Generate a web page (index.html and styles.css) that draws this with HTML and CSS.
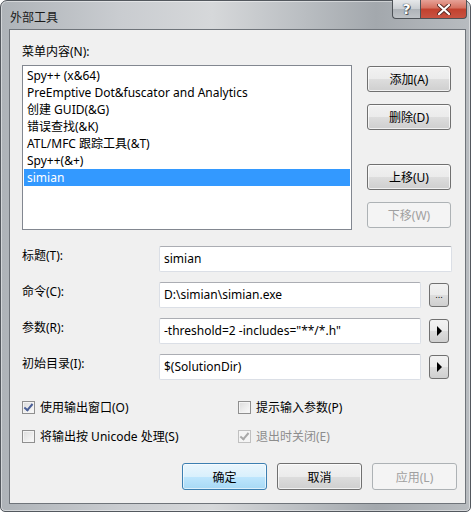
FILE: index.html
```html
<!DOCTYPE html>
<html>
<head>
    <title>外部工具</title>
    <link rel="stylesheet" href="styles.css">
</head>
<body>
    <div class="window">
        <div class="titlebar">
            <span class="title">外部工具</span>
            <div class="caption-buttons">
                <div class="cap-btn help">?</div>
                <div class="cap-btn close">
                    <svg width="14" height="11" viewBox="0 0 14 11">
                        <path d="M2 1 L12 10 M12 1 L2 10" stroke="#5a2a24" stroke-width="4" stroke-linecap="round"/>
                        <path d="M2 1 L12 10 M12 1 L2 10" stroke="#ffffff" stroke-width="2.2" stroke-linecap="round"/>
                    </svg>
                </div>
            </div>
        </div>

        <div class="client">
            <div class="list-label">菜单内容(N):</div>
            <div class="list-row">
                <ul class="listbox">
                    <li>Spy++ (x&amp;64)</li>
                    <li>PreEmptive Dot&amp;fuscator and Analytics</li>
                    <li>创建 GUID(&amp;G)</li>
                    <li>错误查找(&amp;K)</li>
                    <li>ATL/MFC 跟踪工具(&amp;T)</li>
                    <li>Spy++(&amp;+)</li>
                    <li class="selected">simian</li>
                </ul>
                <div class="side-buttons">
                    <button class="btn">添加(A)</button>
                    <button class="btn">删除(D)</button>
                    <button class="btn move-up">上移(U)</button>
                    <button class="btn" disabled>下移(W)</button>
                </div>
            </div>

            <div class="form">
                <label class="field-label">标题(T):</label>
                <div class="input wide">simian</div>

                <label class="field-label">命令(C):</label>
                <div class="input">D:\simian\simian.exe</div>
                <button class="small-btn dots">...</button>

                <label class="field-label">参数(R):</label>
                <div class="input">-threshold=2 -includes="**/*.h"</div>
                <button class="small-btn"><span class="arrow"></span></button>

                <label class="field-label">初始目录(I):</label>
                <div class="input">$(SolutionDir)</div>
                <button class="small-btn"><span class="arrow"></span></button>
            </div>

            <div class="options">
                <div class="check"><span class="box checked"></span>使用输出窗口(O)</div>
                <div class="check"><span class="box"></span>提示输入参数(P)</div>
                <div class="check"><span class="box"></span>将输出按 Unicode 处理(S)</div>
                <div class="check disabled"><span class="box checked"></span>退出时关闭(E)</div>
            </div>

            <div class="footer">
                <button class="btn default">确定</button>
                <button class="btn">取消</button>
                <button class="btn" disabled>应用(L)</button>
            </div>
        </div>
    </div>
</body>
</html>
```

FILE: styles.css
```css
body {
    margin: 0;
    background-color: #ffffff;
    font-family: "Noto Sans", "Noto Sans CJK SC", sans-serif;
    font-size: 12px;
    color: #000;
}

.window {
    width: 471px;
    height: 512px;
    box-sizing: border-box;
    padding: 0 4px 7px 8px;
    border: 1px solid #53585e;
    border-radius: 7px 7px 5px 5px;
    background: linear-gradient(90deg, #aeb3b8 0%, #c9ccd0 25%, #d6d8da 45%, #b9bdc1 65%, #a3a8ad 80%, #b8bcc0 100%);
    box-shadow: inset 0 0 0 1px rgba(255,255,255,0.45);
}

.titlebar {
    height: 28px;
    display: flex;
    justify-content: space-between;
    align-items: flex-start;
}

.title {
    margin-top: 7px;
    margin-left: 1px;
    color: #1a1a1a;
}

.caption-buttons {
    display: flex;
    margin-top: -1px;
    margin-right: -1px;
}

.cap-btn {
    height: 19px;
    border: 1px solid #4d5257;
    border-top: none;
    box-sizing: border-box;
    display: flex;
    align-items: center;
    justify-content: center;
}

.help {
    width: 28px;
    border-radius: 0 0 0 4px;
    border-right: none;
    background: linear-gradient(#e6e8ea, #c9cdd1 50%, #aeb3b8 51%, #bfc3c7);
    color: #ffffff;
    font-family: "DejaVu Sans", sans-serif;
    font-weight: bold;
    font-size: 14px;
    text-shadow: 0 0 1px #3c4046, 0 0 1px #3c4046, 1px 1px 0 #5a5e63;
}

.close {
    width: 47px;
    border-radius: 0 0 4px 0;
    background: linear-gradient(#e6a297, #d5705f 45%, #c2412e 50%, #c85342);
}

.client {
    height: 475px;
    box-sizing: border-box;
    border: 1px solid #6f747a;
    background-color: #f0f0f0;
    padding: 13px 13px 0 12px;
}

.list-label {
    line-height: 17px;
    margin-bottom: 5px;
}

.list-row {
    display: flex;
    align-items: flex-start;
}

.listbox {
    list-style: none;
    margin: 0;
    padding: 1px;
    width: 330px;
    height: 165px;
    box-sizing: border-box;
    border: 1px solid #828790;
    background-color: #ffffff;
}

.listbox li {
    height: 17px;
    line-height: 17px;
    padding-left: 3px;
    white-space: nowrap;
}

.listbox li.selected {
    background-color: #3399ff;
    color: #ffffff;
}

.side-buttons {
    display: flex;
    flex-direction: column;
    margin-left: 15px;
    padding-top: 1px;
    gap: 12px;
}

.side-buttons .btn {
    width: 84px;
    height: 26px;
}

.side-buttons .move-up {
    margin-top: 22px;
}

.btn {
    font-family: inherit;
    font-size: 12px;
    color: #000;
    padding: 0;
    border: 1px solid #707070;
    border-radius: 3px;
    background: linear-gradient(#f2f2f2, #ebebeb 50%, #dddddd 51%, #cfcfcf);
    box-shadow: inset 0 0 0 1px rgba(255,255,255,0.7);
}

.btn:disabled {
    color: #a0a0a0;
    border-color: #adb2b5;
    background: #f4f4f4;
    box-shadow: none;
}

.btn.default {
    border-color: #3c7fb1;
    background: linear-gradient(#eaf6fd, #d9f0fc 50%, #bee6fd 51%, #a7d9f5);
    box-shadow: inset 0 0 0 1px rgba(255,255,255,0.6);
}

.form {
    margin-top: 16px;
    display: grid;
    grid-template-columns: 137px 262px 31px;
    grid-auto-rows: 26px;
    row-gap: 10px;
}

.field-label {
    line-height: 17px;
    padding-top: 1px;
}

.input {
    box-sizing: border-box;
    height: 26px;
    line-height: 24px;
    padding-left: 4px;
    background-color: #ffffff;
    border: 1px solid #dbdfe6;
    border-top-color: #abadb3;
    border-radius: 2px;
    white-space: nowrap;
    overflow: hidden;
}

.input.wide {
    grid-column: 2 / 4;
}

.small-btn {
    width: 20px;
    height: 24px;
    margin-left: 8px;
    align-self: center;
    padding: 0;
    border: 1px solid #707070;
    border-radius: 3px;
    background: linear-gradient(#f2f2f2, #ebebeb 50%, #dddddd 51%, #cfcfcf);
    display: flex;
    align-items: center;
    justify-content: center;
    font-family: "DejaVu Sans", sans-serif;
    color: #000;
}

.small-btn.dots {
    font-size: 8px;
    line-height: 10px;
    padding-top: 2px;
    letter-spacing: 0;
}

.arrow {
    width: 0;
    height: 0;
    border-top: 5px solid transparent;
    border-bottom: 5px solid transparent;
    border-left: 5px solid #000;
}

.options {
    margin-top: 19px;
    display: grid;
    grid-template-columns: 216px 1fr;
    grid-auto-rows: 17px;
    row-gap: 12px;
}

.check {
    display: flex;
    align-items: center;
    gap: 5px;
    line-height: 17px;
}

.check.disabled {
    color: #8d8d8d;
}

.box {
    width: 11px;
    height: 11px;
    border: 1px solid #8f8f8f;
    background: linear-gradient(135deg, #dcdcdc, #fbfbfb);
    box-shadow: inset 0 0 0 1px #f4f4f4;
    position: relative;
}

.box.checked::after {
    content: "";
    position: absolute;
    left: 3px;
    top: 0;
    width: 3px;
    height: 7px;
    border-right: 2px solid #4a5f97;
    border-bottom: 2px solid #4a5f97;
    transform: rotate(40deg);
}

.check.disabled .box {
    border-color: #c0c0c0;
    background: #f4f4f4;
}

.check.disabled .box.checked::after {
    border-color: #a8a8a8;
}

.footer {
    margin-top: 18px;
    margin-right: -5px;
    display: flex;
    justify-content: flex-end;
    gap: 10px;
}

.footer .btn {
    width: 85px;
    height: 27px;
}
```
